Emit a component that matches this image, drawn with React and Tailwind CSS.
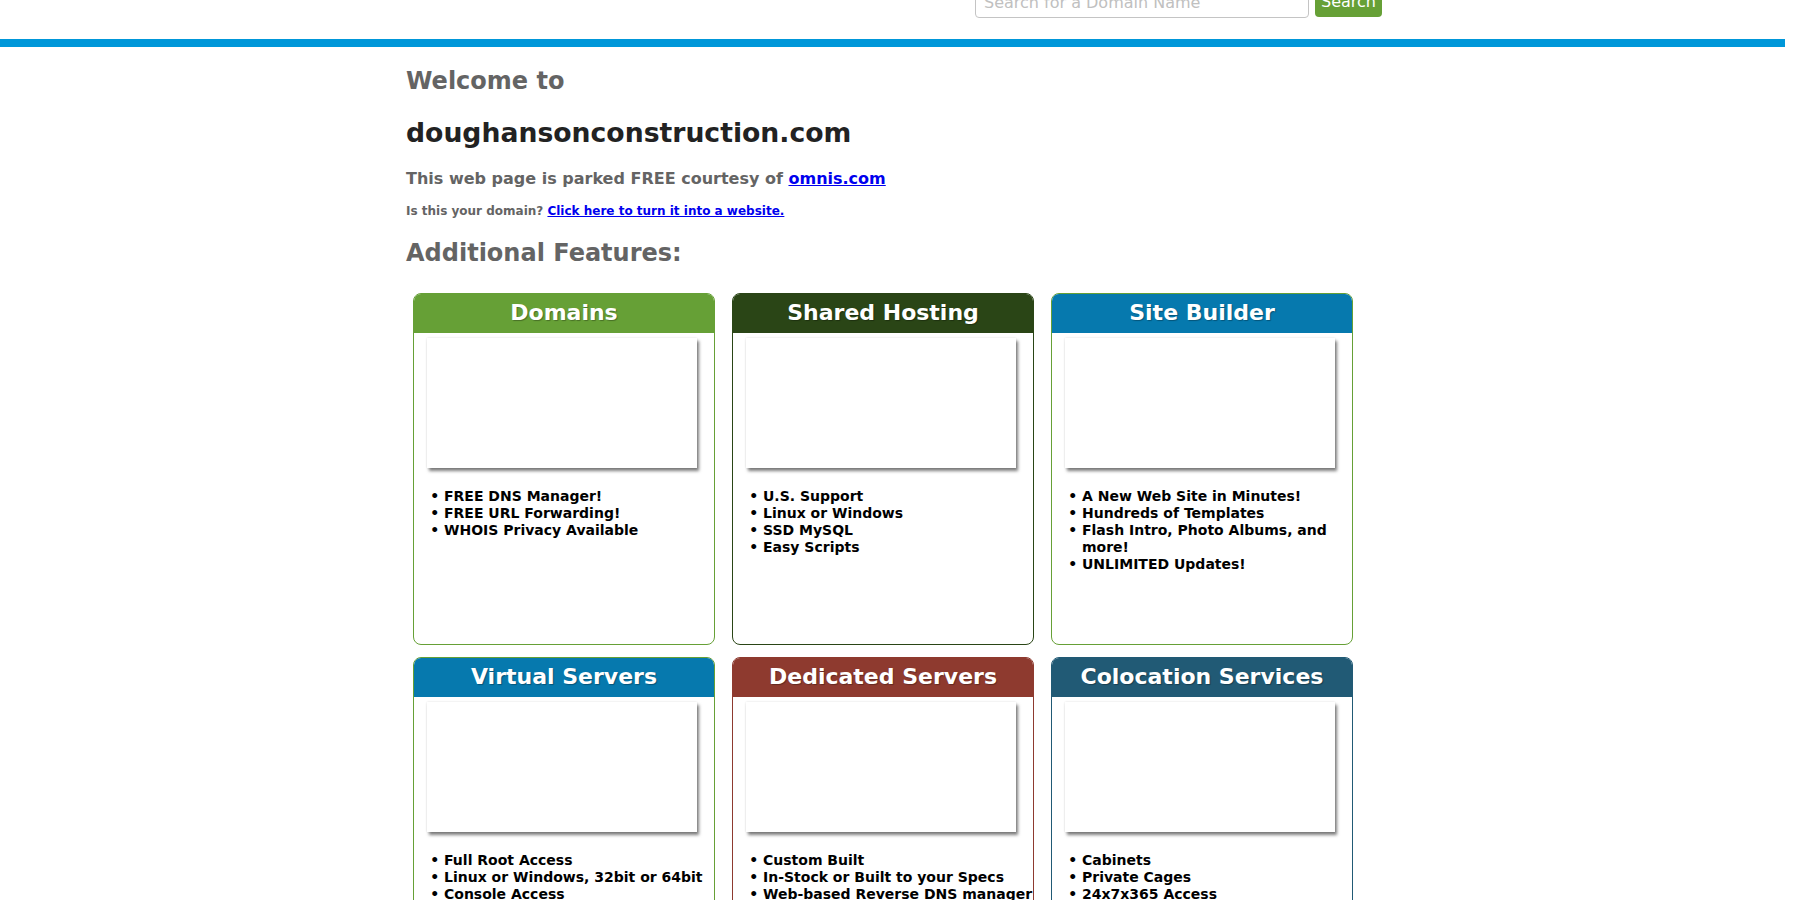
import React from "react";

const cards = [
  {
    title: "Domains",
    head: "bg-[#66a036]",
    border: "border-[#66a036]",
    items: ["FREE DNS Manager!", "FREE URL Forwarding!", "WHOIS Privacy Available"],
  },
  {
    title: "Shared Hosting",
    head: "bg-[#2a4516]",
    border: "border-[#2a4516]",
    items: ["U.S. Support", "Linux or Windows", "SSD MySQL", "Easy Scripts"],
  },
  {
    title: "Site Builder",
    head: "bg-[#0679ae]",
    border: "border-[#66a036]",
    items: [
      "A New Web Site in Minutes!",
      "Hundreds of Templates",
      "Flash Intro, Photo Albums, and more!",
      "UNLIMITED Updates!",
    ],
  },
  {
    title: "Virtual Servers",
    head: "bg-[#0679ae]",
    border: "border-[#66a036]",
    items: ["Full Root Access", "Linux or Windows, 32bit or 64bit", "Console Access", "Instant Setup"],
  },
  {
    title: "Dedicated Servers",
    head: "bg-[#8e3a2f]",
    border: "border-[#8e3a2f]",
    items: ["Custom Built", "In-Stock or Built to your Specs", "Web-based Reverse DNS manager", "24x7 Support"],
  },
  {
    title: "Colocation Services",
    head: "bg-[#215a75]",
    border: "border-[#215a75]",
    items: ["Cabinets", "Private Cages", "24x7x365 Access", "Redundant Power"],
  },
];

function Card({ c }) {
  return (
    <div className={`w-[302px] h-[352px] border ${c.border} rounded-[8px] overflow-hidden bg-white`}>
      <div
        className={`${c.head} h-[39px] flex items-center justify-center text-white text-[22px] font-bold leading-[26px] [text-shadow:1px_1px_1px_rgba(0,0,0,0.3)]`}
      >
        <span className="-mt-[1px]">{c.title}</span>
      </div>
      <div className="ml-[13px] mt-[5px] w-[270px] h-[130px] bg-white shadow-[0_0_2px_rgba(0,0,0,0.12),2px_3px_3px_rgba(0,0,0,0.5)]" />
      <ul className="mt-[20px] pl-[30px] -mr-[2px] list-['•_'] text-[14px] leading-[17px] font-bold text-black">
        {c.items.map((it) => (
          <li key={it}>{it}</li>
        ))}
      </ul>
    </div>
  );
}

export default function App() {
  return (
    <div className="w-[1785px] bg-white font-['DejaVu_Sans',sans-serif] pb-[40px]">
      <div className="h-[39px] overflow-hidden">
        <div className="w-[975px] mx-auto">
          <div className="-mt-[16px] flex justify-end gap-[6px] translate-x-[2px]">
            <div className="w-[334px] h-[34px] border border-[#c4c4c4] rounded-[4px] flex items-center pl-[8px] pt-[3px] text-[16px] text-[#c0c0c0]">
              Search for a Domain Name
            </div>
            <div className="w-[67px] h-[33px] rounded-[4px] bg-[#66a036] text-white text-[16px] flex items-center justify-center pt-[3px]">
              Search
            </div>
          </div>
        </div>
      </div>
      <div className="h-[8px] bg-[#0097d9]" />
      <div className="w-[975px] mx-auto pl-[1px]">
        <div className="mt-[20px] text-[24px] leading-[28px] font-bold text-[#646464]">Welcome to</div>
        <div className="mt-[22px] text-[26.67px] leading-[32px] font-bold text-[#222222]">
          doughansonconstruction.com
        </div>
        <div className="mt-[20px] text-[16px] leading-[19px] font-bold text-[#646464]">
          This web page is parked FREE courtesy of{" "}
          <a href="#" className="text-[#0000ee] underline">
            omnis.com
          </a>
        </div>
        <div className="mt-[16px] text-[12px] leading-[14px] font-bold text-[#646464]">
          Is this your domain?{" "}
          <a href="#" className="text-[#0000ee] underline">
            Click here to turn it into a website.
          </a>
        </div>
        <div className="mt-[21px] text-[24px] leading-[28px] font-bold text-[#646464]">Additional Features:</div>
        <div className="mt-[26px] ml-[7px] grid grid-cols-[302px_302px_302px] gap-x-[17px] gap-y-[12px]">
          {cards.map((c) => (
            <Card key={c.title} c={c} />
          ))}
        </div>
      </div>
    </div>
  );
}
